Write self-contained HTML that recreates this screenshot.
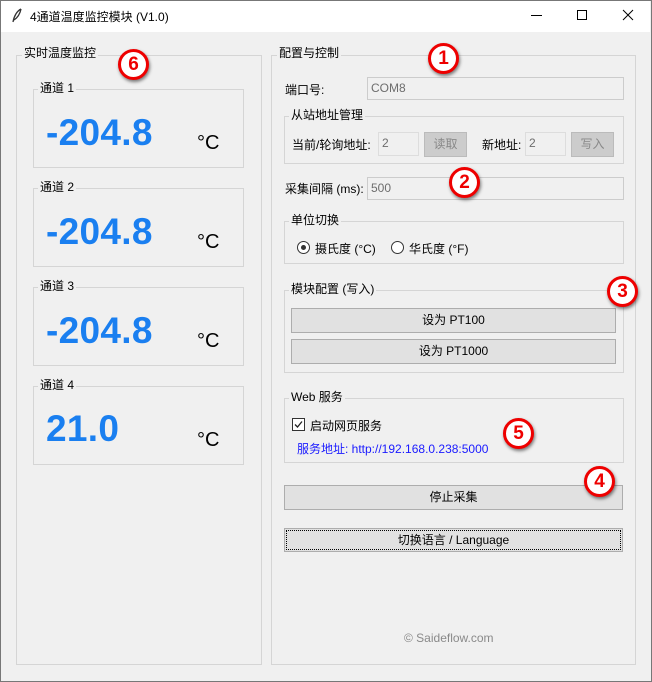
<!DOCTYPE html><html><head><meta charset="utf-8"><style>
*{box-sizing:border-box;margin:0;padding:0}
body{width:652px;height:682px;background:#f0f0f0;font-family:"Liberation Sans","Noto Sans CJK SC",sans-serif;font-size:12px;color:#000;position:relative;overflow:hidden}
.a{position:absolute}
.win{left:0;top:0;width:652px;height:682px;border:1px solid #777;border-top:1px solid #777}
.title{left:1px;top:1px;width:649px;height:31px;background:#fff}
.gb{position:absolute;border:1px solid #d5d5d5}
.lbl{position:absolute;background:#f0f0f0;padding:0 2px;font-size:12px;line-height:14px}
.ent{position:absolute;border:1px solid #ccc;background:#f0f0f0;color:#6d6d6d;padding-left:3px;font-size:12px;line-height:20px}
.btn{position:absolute;border:1px solid #adadad;background:#e1e1e1;text-align:center;font-size:12px}
.num{position:absolute;color:#1a7ff0;font-weight:bold;font-size:37px;line-height:40px;letter-spacing:0.3px}
.deg{position:absolute;font-size:20px;line-height:22px}
.c{position:absolute;width:31px;height:31px;border-radius:50%;background:#fff;border:3px solid #e00;color:#e00;font-weight:bold;font-size:19px;text-align:center;line-height:25px;box-shadow:1px 2px 3px rgba(0,0,0,.5)}
</style></head><body>
<div class="a win"></div>
<div class="a title"></div>
<svg class="a" style="left:11px;top:8px" width="12" height="16"><path d="M10 1 C6 3 3 8 2 14 M10 1 C9 6 6 10 3 12" stroke="#333" stroke-width="1.3" fill="none"/></svg>
<div class="a" style="left:30px;top:8px;font-size:12px">4通道温度监控模块 (V1.0)</div>
<div class="a" style="left:531px;top:15px;width:11px;height:1px;background:#000"></div>
<div class="a" style="left:577px;top:10px;width:10px;height:10px;border:1px solid #000"></div>
<svg class="a" style="left:622px;top:9px" width="12" height="12"><path d="M1 1L11 11M11 1L1 11" stroke="#000" stroke-width="1"/></svg>

<div class="gb" style="left:16px;top:55px;width:246px;height:610px"></div>
<div class="lbl" style="left:22px;top:46px">实时温度监控</div>

<div class="gb" style="left:33px;top:89px;width:211px;height:79px"></div>
<div class="lbl" style="left:38px;top:81px">通道 1</div>
<div class="num" style="left:46px;top:113px">-204.8</div><div class="deg" style="left:197px;top:132px">°C</div>
<div class="gb" style="left:33px;top:188px;width:211px;height:79px"></div>
<div class="lbl" style="left:38px;top:180px">通道 2</div>
<div class="num" style="left:46px;top:212px">-204.8</div><div class="deg" style="left:197px;top:231px">°C</div>
<div class="gb" style="left:33px;top:287px;width:211px;height:79px"></div>
<div class="lbl" style="left:38px;top:279px">通道 3</div>
<div class="num" style="left:46px;top:311px">-204.8</div><div class="deg" style="left:197px;top:330px">°C</div>
<div class="gb" style="left:33px;top:386px;width:211px;height:79px"></div>
<div class="lbl" style="left:38px;top:378px">通道 4</div>
<div class="num" style="left:46px;top:409px">21.0</div><div class="deg" style="left:197px;top:429px">°C</div>

<div class="gb" style="left:271px;top:55px;width:365px;height:610px"></div>
<div class="lbl" style="left:277px;top:46px">配置与控制</div>
<div class="a" style="left:285px;top:81px">端口号:</div>
<div class="ent" style="left:367px;top:77px;width:257px;height:23px">COM8</div>

<div class="gb" style="left:284px;top:116px;width:340px;height:48px"></div>
<div class="lbl" style="left:289px;top:108px">从站地址管理</div>
<div class="a" style="left:292px;top:136px">当前/轮询地址:</div>
<div class="ent" style="left:378px;top:132px;width:41px;height:24px;border-color:#ddd">2</div>
<div class="btn" style="left:424px;top:132px;width:43px;height:25px;line-height:23px;color:#888;background:#ccc;border-color:#bbb">读取</div>
<div class="a" style="left:482px;top:136px">新地址:</div>
<div class="ent" style="left:525px;top:132px;width:41px;height:24px;border-color:#ddd">2</div>
<div class="btn" style="left:571px;top:132px;width:43px;height:25px;line-height:23px;color:#888;background:#ccc;border-color:#bbb">写入</div>

<div class="a" style="left:285px;top:180px">采集间隔 (ms):</div>
<div class="ent" style="left:367px;top:177px;width:257px;height:23px">500</div>

<div class="gb" style="left:284px;top:221px;width:340px;height:43px"></div>
<div class="lbl" style="left:289px;top:213px">单位切换</div>
<div class="a" style="left:297px;top:241px;width:13px;height:13px;border:1px solid #333;border-radius:50%;background:#fff"></div>
<div class="a" style="left:301px;top:245px;width:5px;height:5px;border-radius:50%;background:#333"></div>
<div class="a" style="left:315px;top:240px">摄氏度 (°C)</div>
<div class="a" style="left:391px;top:241px;width:13px;height:13px;border:1px solid #333;border-radius:50%;background:#fff"></div>
<div class="a" style="left:409px;top:240px">华氏度 (°F)</div>

<div class="gb" style="left:284px;top:290px;width:340px;height:83px"></div>
<div class="lbl" style="left:289px;top:282px">模块配置 (写入)</div>
<div class="btn" style="left:291px;top:308px;width:325px;height:25px;line-height:23px">设为 PT100</div>
<div class="btn" style="left:291px;top:339px;width:325px;height:25px;line-height:23px">设为 PT1000</div>

<div class="gb" style="left:284px;top:398px;width:340px;height:65px"></div>
<div class="lbl" style="left:289px;top:390px">Web 服务</div>
<div class="a" style="left:292px;top:418px;width:13px;height:13px;border:1px solid #333;background:#fff"></div>
<svg class="a" style="left:293px;top:419px" width="11" height="11"><path d="M2 5.5L4.5 8L9 2.5" stroke="#222" stroke-width="1.3" fill="none"/></svg>
<div class="a" style="left:310px;top:417px">启动网页服务</div>
<div class="a" style="left:297px;top:440px;color:#1a1aff">服务地址: http://192.168.0.238:5000</div>

<div class="btn" style="left:284px;top:485px;width:339px;height:25px;line-height:23px">停止采集</div>
<div class="btn" style="left:284px;top:528px;width:339px;height:24px;line-height:22px;outline:1px dotted #000;outline-offset:-3px">切换语言 / Language</div>
<div class="a" style="left:404px;top:631px;color:#8a8a8a">© Saideflow.com</div>

<div class="c" style="left:428px;top:43px">1</div>
<div class="c" style="left:449px;top:167px">2</div>
<div class="c" style="left:607px;top:276px">3</div>
<div class="c" style="left:584px;top:466px">4</div>
<div class="c" style="left:503px;top:418px">5</div>
<div class="c" style="left:118px;top:49px">6</div>
</body></html>
